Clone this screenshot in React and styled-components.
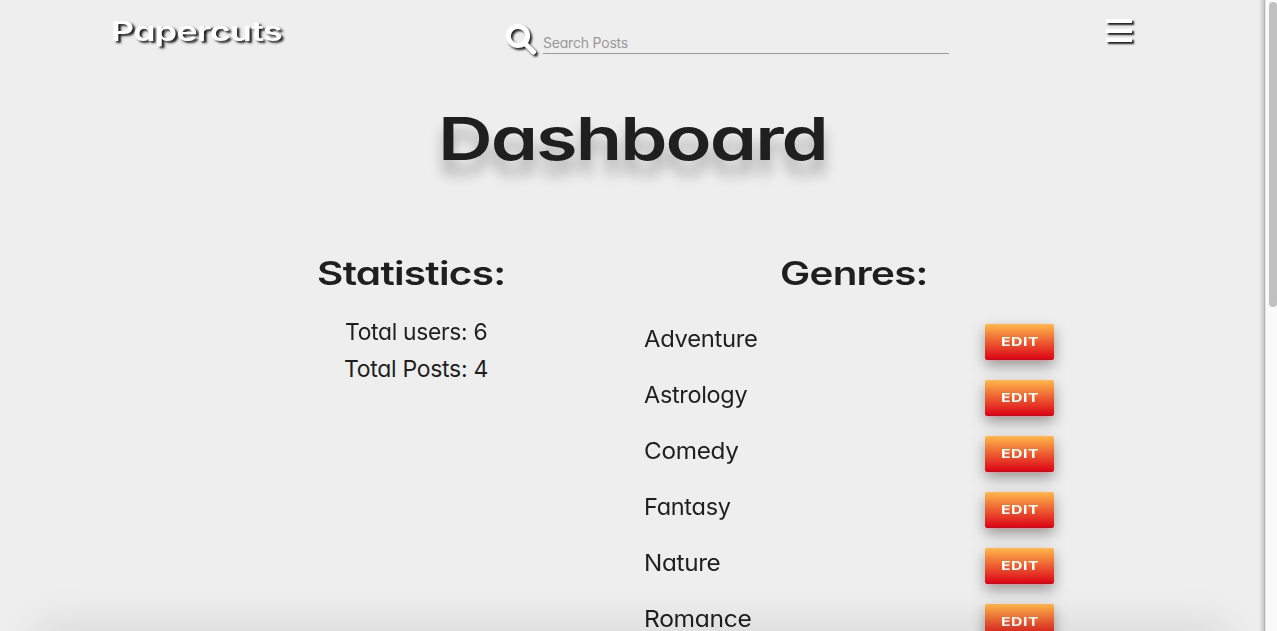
import React, { useLayoutEffect, useRef, useState } from "react";
import styled, { createGlobalStyle } from "styled-components";

const GlobalStyle = createGlobalStyle`
  * { box-sizing: border-box; }
  body {
    margin: 0;
    overflow: hidden;
    background: #eeeeee;
    color: #1f1f1f;
    font-family: Inter, "Liberation Sans", sans-serif;
    font-weight: 440;
    font-feature-settings: "cv11" 1;
  }
  h1, h2 { margin: 0; padding: 0; }
`;

const Window = styled.div`
  display: flex;
  width: 100%;
  height: 631px;
  overflow: hidden;
`;

const Page = styled.div`
  position: relative;
  flex: 1;
  height: 631px;
  overflow: hidden;
  border-right: 1px solid #b4b4b4;
  background: linear-gradient(to left, rgba(0, 0, 0, 0.16), rgba(0, 0, 0, 0) 5px);
`;

const FooterShade = styled.div`
  position: absolute;
  left: 40px;
  right: 40px;
  bottom: -22px;
  height: 20px;
  box-shadow: 0 0 44px 4px rgba(0, 0, 0, 0.13);
`;

const ScrollTrack = styled.div`
  width: 12px;
  padding: 2px 0 0 3px;
  background: #fafafa;
  border-left: 1px solid #e6e6e6;
`;

const ScrollThumb = styled.div`
  width: 8px;
  height: 305px;
  border-radius: 4px;
  background: #c1c1c1;
`;

const FitBox = styled.span`
  display: block;
  flex: none;
  width: ${(p) => p.$width}px;
  text-align: left;
  white-space: nowrap;
`;

const FitInner = styled.span`
  display: inline-block;
  transform-origin: 0 50%;
`;

/* Sets a line of text to an extended or condensed width. */
function Fit({ width, children }) {
  const ref = useRef(null);
  const [scale, setScale] = useState(1);
  useLayoutEffect(() => {
    setScale(width / ref.current.offsetWidth);
  }, [width, children]);
  return (
    <FitBox $width={width}>
      <FitInner ref={ref} style={{ transform: `scaleX(${scale})` }}>
        {children}
      </FitInner>
    </FitBox>
  );
}

const Header = styled.header`
  display: flex;
  align-items: flex-start;
  height: 64px;
  padding-left: 111px;
`;

const Brand = styled.div`
  width: 394px;
  padding-top: 14px;
  color: #fff;
  font-size: 27px;
  font-weight: 620;
  letter-spacing: -0.5px;
  line-height: 36px;
  text-shadow: 2px 2px 2px #1f1f1f;
`;

const SearchIcon = styled.svg`
  width: 38px;
  height: 40px;
  margin-top: 20px;
  overflow: visible;
  filter: drop-shadow(2px 2px 1px #1f1f1f);
`;

const SearchField = styled.div`
  display: flex;
  align-items: flex-end;
  width: 406px;
  height: 54px;
  padding-bottom: 1px;
  border-bottom: 1px solid #9a9a9a;
  color: #999;
  font-size: 14px;
  letter-spacing: -0.2px;
  line-height: 18px;
`;

const Menu = styled.div`
  display: flex;
  flex-direction: column;
  gap: 5.5px;
  margin: 19px 0 0 157px;
`;

const MenuBar = styled.div`
  width: 26px;
  height: 4px;
  background: #fff;
  box-shadow: 2px 2px 2px #1f1f1f;
`;

const Title = styled.h1`
  display: flex;
  justify-content: center;
  padding-top: 40px;
  font-size: 59px;
  font-weight: 620;
  letter-spacing: -1.5px;
  line-height: 70px;
  text-shadow: 0 14px 12px rgba(0, 0, 0, 0.28);
`;

const Columns = styled.main`
  display: flex;
  padding: 77px 0 0 211px;
`;

const Statistics = styled.section`
  display: flex;
  flex-direction: column;
  align-items: center;
  width: 400px;
  margin-right: 33px;
`;

const Heading = styled.h2`
  font-size: 33px;
  font-weight: 630;
  letter-spacing: -0.6px;
  line-height: 44px;
`;

const StatList = styled.div`
  display: flex;
  flex-direction: column;
  align-items: center;
  padding: 19px 0 0 10px;
  font-size: 23px;
  letter-spacing: -0.3px;
  line-height: 37px;
`;

const Genres = styled.section`
  display: flex;
  flex-direction: column;
  align-items: center;
  width: 420px;
`;

const GenreList = styled.div`
  display: flex;
  flex-direction: column;
  gap: 20px;
  width: 410px;
  margin-right: 10px;
  padding-top: 29px;
`;

const GenreRow = styled.div`
  display: flex;
  justify-content: space-between;
  height: 36px;
  font-size: 23px;
  letter-spacing: -0.3px;
  line-height: 30px;
`;

const EditButton = styled.button`
  display: flex;
  justify-content: center;
  width: 69px;
  height: 36px;
  padding: 9px 0 0 1px;
  border: 0;
  border-radius: 2px;
  background: linear-gradient(#ffb84a, #dc0014);
  box-shadow: 0 6px 14px rgba(0, 0, 0, 0.36);
  color: #fff;
  font: 700 12px/18px Inter, sans-serif;
  letter-spacing: 0.4px;
`;

const genres = [
  ["Adventure", 114],
  ["Astrology", 103],
  ["Comedy", 94],
  ["Fantasy", 87],
  ["Nature", 76],
  ["Romance", 108],
];

export default function App() {
  return (
    <Window>
      <GlobalStyle />
      <Page>
        <Header>
          <Brand><Fit width={171}>Papercuts</Fit></Brand>
          <SearchIcon viewBox="0 0 38 40" fill="none" stroke="#fff">
            <circle cx="13" cy="16" r="9.6" strokeWidth="5" />
            <path d="M20 23.5 L28.5 32" strokeWidth="5" strokeLinecap="round" />
          </SearchIcon>
          <SearchField><Fit width={85}>Search Posts</Fit></SearchField>
          <Menu>
            <MenuBar />
            <MenuBar />
            <MenuBar />
          </Menu>
        </Header>
        <Title><Fit width={389}>Dashboard</Fit></Title>
        <Columns>
          <Statistics>
            <Heading><Fit width={188}>Statistics:</Fit></Heading>
            <StatList>
              <Fit width={142}>Total users: 6</Fit>
              <Fit width={144}>Total Posts: 4</Fit>
            </StatList>
          </Statistics>
          <Genres>
            <Heading><Fit width={148}>Genres:</Fit></Heading>
            <GenreList>
              {genres.map(([name, width]) => (
                <GenreRow key={name}>
                  <Fit width={width}>{name}</Fit>
                  <EditButton><Fit width={38}>EDIT</Fit></EditButton>
                </GenreRow>
              ))}
            </GenreList>
          </Genres>
        </Columns>
        <FooterShade />
      </Page>
      <ScrollTrack><ScrollThumb /></ScrollTrack>
    </Window>
  );
}
